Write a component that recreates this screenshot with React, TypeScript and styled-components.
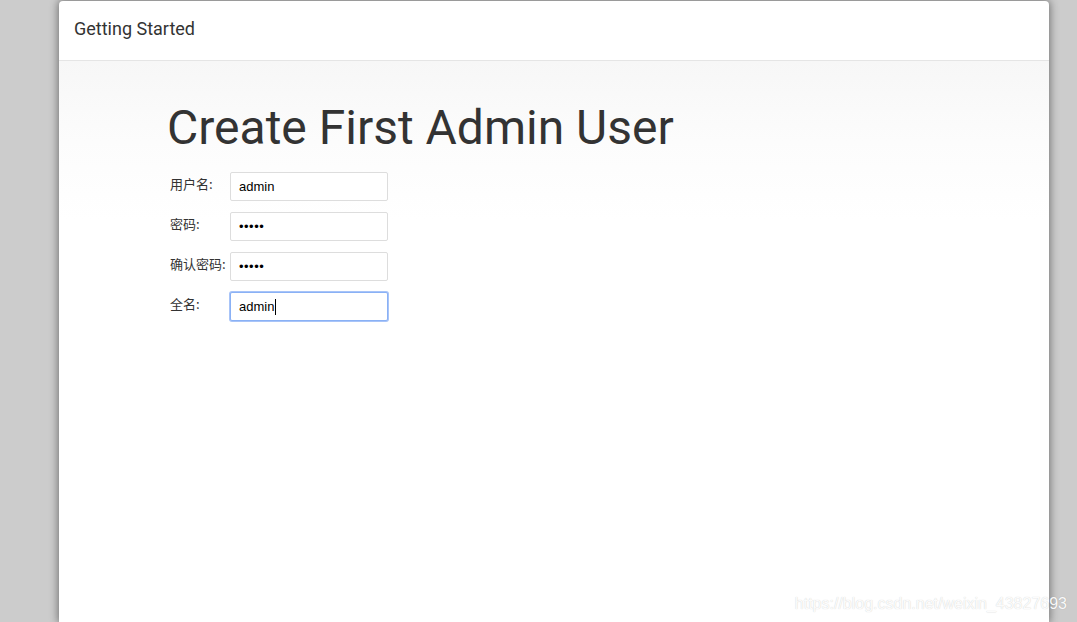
import React from 'react';
import styled, { createGlobalStyle } from 'styled-components';

const GlobalStyle = createGlobalStyle`
    html, body {
        margin: 0;
        padding: 0;
        height: 100%;
        background: #cccccc;
        overflow: hidden;
    }
    #root {
        height: 100%;
    }
`;

const Page = styled.div`
    position: relative;
    height: 100%;
    padding: 1px 0 0 59px;
    box-sizing: border-box;
    display: flex;
    flex-direction: column;
`;

const Dialog = styled.div`
    width: 990px;
    flex: 1;
    background: #fff;
    border-radius: 4px 4px 0 0;
    box-shadow: 0 0 8px 1px rgba(0, 0, 0, 0.45);
    display: flex;
    flex-direction: column;
`;

const Header = styled.div`
    height: 60px;
    box-sizing: border-box;
    border-bottom: 1px solid #e5e5e5;
    display: flex;
    align-items: center;
    padding: 0 15px 5px;
    font-family: Roboto, 'Liberation Sans', sans-serif;
    font-size: 18px;
    color: #333;
`;

const Body = styled.div`
    flex: 1;
    padding: 35px 0 0 108px;
    background: linear-gradient(to bottom, #f7f7f7 0px, #fcfcfc 80px, #ffffff 160px);
`;

const Title = styled.h1`
    margin: 0 0 12px 0;
    font-family: Roboto, 'Liberation Sans', sans-serif;
    font-weight: 400;
    font-size: 48px;
    line-height: 64px;
    color: #333;
`;

const Form = styled.div`
    display: grid;
    grid-template-columns: 60px 158px;
    row-gap: 11px;
    margin-left: 3px;
`;

const Label = styled.label`
    font-family: 'Noto Sans CJK SC', sans-serif;
    font-size: 13px;
    color: #333;
    padding-top: 2px;
    white-space: nowrap;
`;

const Input = styled.div<{ $focused?: boolean }>`
    height: 29px;
    box-sizing: border-box;
    border: 1px solid ${(p) => (p.$focused ? '#8ab1f5' : '#dddddd')};
    box-shadow: ${(p) => (p.$focused ? '0 0 0 1px #a8c4f8' : 'none')};
    border-radius: 2px;
    background: #fff;
    padding: 0 8px;
    display: flex;
    align-items: center;
    font-family: 'Liberation Sans', Arial, sans-serif;
    font-size: 13px;
    color: #000;
`;

const Dots = styled.span`
    font-size: 13px;
    letter-spacing: 0.5px;
`;

const Caret = styled.span`
    display: inline-block;
    width: 1px;
    height: 16px;
    background: #000;
    margin-left: 1px;
`;

const Watermark = styled.div`
    position: absolute;
    right: 10px;
    bottom: 9px;
    font-family: 'Liberation Sans', Arial, sans-serif;
    font-size: 16px;
    color: rgba(255, 255, 255, 0.95);
    text-shadow: 0 0 1px rgba(0, 0, 0, 0.22);
`;

const fields = [
    { label: '用户名:', value: 'admin' },
    { label: '密码:', value: '•••••', password: true },
    { label: '确认密码:', value: '•••••', password: true },
    { label: '全名:', value: 'admin', focused: true },
];

export default function App() {
    return (
        <>
            <GlobalStyle />
            <Page>
                <Dialog>
                    <Header>Getting Started</Header>
                    <Body>
                        <Title>Create First Admin User</Title>
                        <Form>
                            {fields.map((f) => (
                                <React.Fragment key={f.label}>
                                    <Label>{f.label}</Label>
                                    <Input $focused={f.focused}>
                                        {f.password ? <Dots>{f.value}</Dots> : f.value}
                                        {f.focused && <Caret />}
                                    </Input>
                                </React.Fragment>
                            ))}
                        </Form>
                    </Body>
                </Dialog>
                <Watermark>https://blog.csdn.net/weixin_43827693</Watermark>
            </Page>
        </>
    );
}
